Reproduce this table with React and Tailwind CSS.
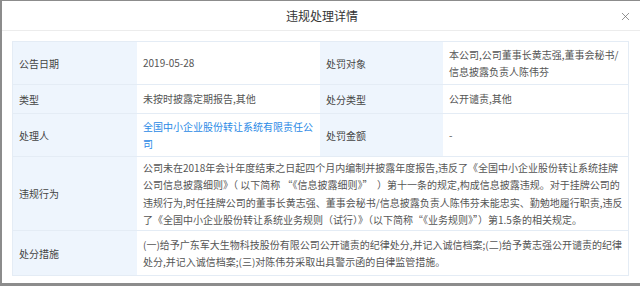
import { X } from "lucide-react";

const rows = [
  {
    h: "h-[43px]",
    left: { label: "公告日期", lines: ["2019-05-28"] },
    right: { label: "处罚对象", lines: ["本公司,公司董事长黄志强,董事会秘书/", "信息披露负责人陈伟芬"] },
  },
  {
    h: "h-[29px]",
    left: { label: "类型", lines: ["未按时披露定期报告,其他"] },
    right: { label: "处分类型", lines: ["公开谴责,其他"] },
  },
  {
    h: "h-[43px]",
    left: { label: "处理人", lines: ["全国中小企业股份转让系统有限责任公", "司"], link: true },
    right: { label: "处罚金额", lines: ["-"] },
  },
];

const wide = [
  {
    h: "h-[74px]",
    label: "违规行为",
    lines: [
      "公司未在2018年会计年度结束之日起四个月内编制并披露年度报告,违反了《全国中小企业股份转让系统挂牌",
      "公司信息披露细则》（ 以下简称 “《信息披露细则》”  ）第十一条的规定,构成信息披露违规。对于挂牌公司的",
      "违规行为,时任挂牌公司的董事长黄志强、董事会秘书/信息披露负责人陈伟芬未能忠实、勤勉地履行职责,违反",
      "了《全国中小企业股份转让系统业务规则（试行）》（以下简称“《业务规则》”）第1.5条的相关规定。",
    ],
  },
  {
    h: "h-[44px]",
    label: "处分措施",
    lines: [
      "(一)给予广东军大生物科技股份有限公司公开谴责的纪律处分,并记入诚信档案;(二)给予黄志强公开谴责的纪律",
      "处分,并记入诚信档案;(三)对陈伟芬采取出具警示函的自律监管措施。",
    ],
  },
];

function Label({ children, className = "" }) {
  return (
    <div className={`flex items-center bg-[#eef5fd] px-[6px] text-[#444] ${className}`}>
      {children}
    </div>
  );
}

function Value({ lines, link, className = "" }) {
  return (
    <div className={`flex flex-col justify-center px-[6px] leading-[17.5px] ${link ? "text-[#2b8ae6]" : "text-[#555]"} ${className}`}>
      {lines.map((l, i) => (
        <span key={i} className="whitespace-pre">{l}</span>
      ))}
    </div>
  );
}

export default function App() {
  return (
    <div
      className="h-[286px] w-[640px] overflow-hidden bg-[#8c8c8c] text-[10px]"
      style={{ fontFamily: "'Noto Sans CJK SC', 'Liberation Sans', sans-serif" }}
    >
      <div className="ml-[2px] mt-[1px] h-[282px] w-[640px] bg-white">
        {/* header */}
        <div className="relative flex h-[30px] items-center justify-center border-b border-[#ececec]">
          <span className="text-[12px] text-[#333]">违规处理详情</span>
          <X size={13} strokeWidth={1.3} className="absolute right-[10px] top-[9px] text-[#666]" />
        </div>

        {/* table */}
        <div className="ml-[10px] mt-[10px] w-[617px] border border-[#e4ecf5]">
          {rows.map((r, i) => (
            <div key={i} className={`grid grid-cols-[124px_183px_123px_1fr] border-b border-[#e4ecf5] ${r.h}`}>
              <Label>{r.left.label}</Label>
              <Value lines={r.left.lines} link={r.left.link} />
              <Label>{r.right.label}</Label>
              <Value lines={r.right.lines} />
            </div>
          ))}
          {wide.map((r, i) => (
            <div
              key={i}
              className={`grid grid-cols-[124px_1fr] ${i === 0 ? "border-b border-[#e4ecf5]" : ""} ${r.h}`}
            >
              <Label>{r.label}</Label>
              <Value lines={r.lines} />
            </div>
          ))}
        </div>
      </div>
    </div>
  );
}
